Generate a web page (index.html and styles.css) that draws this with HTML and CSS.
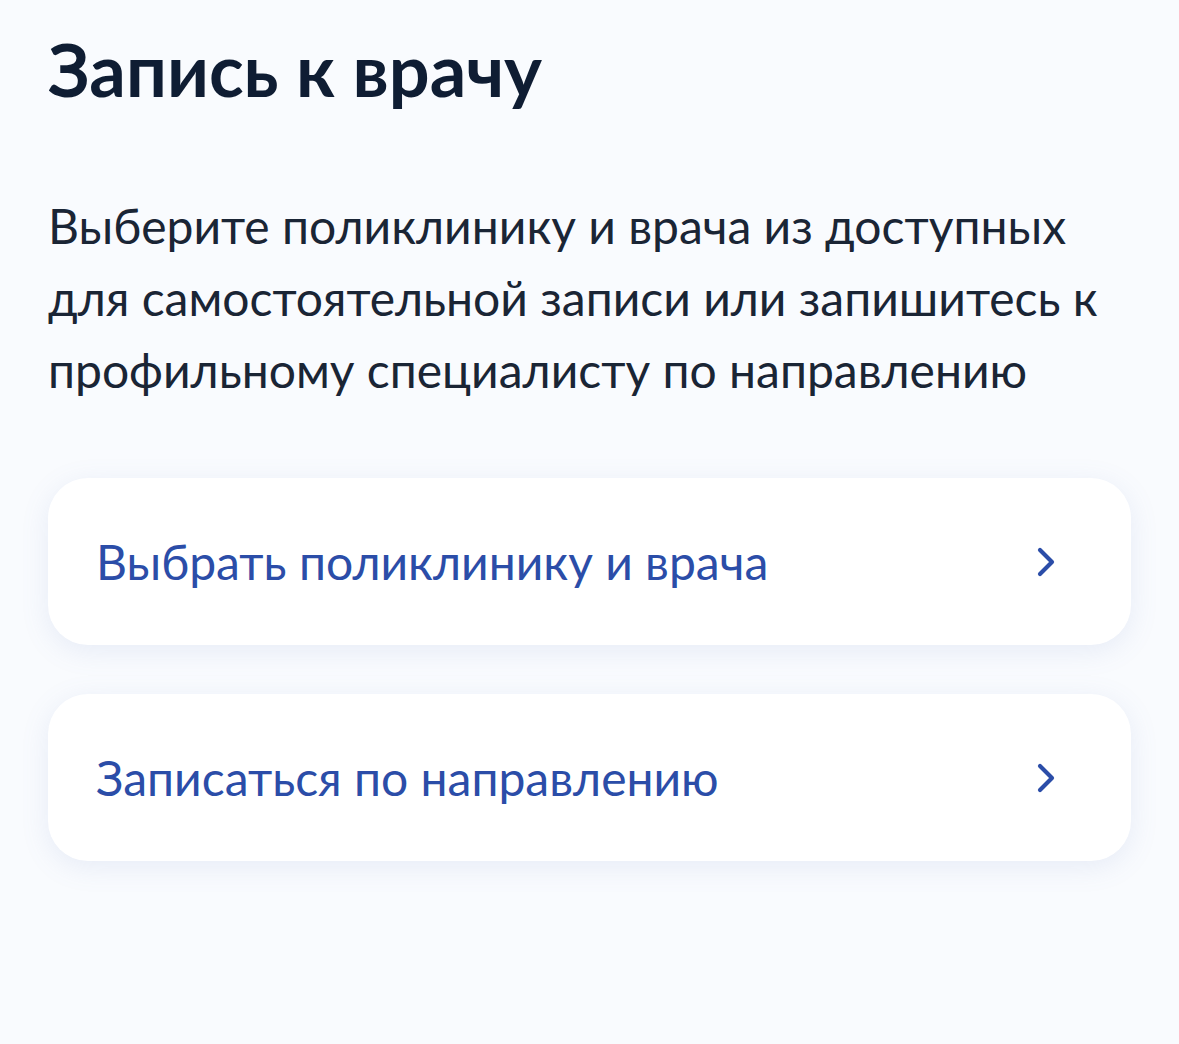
FILE: index.html
```html
<!DOCTYPE html>
<html lang="ru">
<head>
<meta charset="utf-8">
<title>Запись к врачу</title>
<link rel="stylesheet" href="styles.css">
</head>
<body>
<main class="page">
  <h1 class="title">Запись к врачу</h1>
  <p class="lead">Выберите поликлинику и врача из доступных для самостоятельной записи или запишитесь к профильному специалисту по направлению</p>
  <div class="cards">
    <a class="card" href="#">
      <span class="card-text">Выбрать поликлинику и врача</span>
      <svg class="chev" width="18" height="30" viewBox="0 0 18 30" aria-hidden="true"><path d="M3 3 L15 15 L3 27" fill="none" stroke="#2b4da8" stroke-width="4.2" stroke-linecap="round" stroke-linejoin="round"/></svg>
    </a>
    <a class="card" href="#">
      <span class="card-text">Записаться по направлению</span>
      <svg class="chev" width="18" height="30" viewBox="0 0 18 30" aria-hidden="true"><path d="M3 3 L15 15 L3 27" fill="none" stroke="#2b4da8" stroke-width="4.2" stroke-linecap="round" stroke-linejoin="round"/></svg>
    </a>
  </div>
</main>
</body>
</html>
```

FILE: styles.css
```css
html, body {
  margin: 0;
  padding: 0;
  background: #f9fbfe;
}
body {
  font-family: Lato, "Noto Sans", sans-serif;
  color: #0b1f33;
  min-height: 1044px;
}
.page {
  padding: 26px 48px 0 48px;
}
.title {
  margin: 0;
  font-size: 72px;
  font-weight: 700;
  line-height: 1.2;
  color: #0f1d33;
}
.lead {
  margin: 78px 0 0 0;
  font-size: 48px;
  line-height: 72px;
  font-weight: 400;
  color: #1a2535;
}
.cards {
  margin-top: 72px;
  display: flex;
  flex-direction: column;
  gap: 49px;
}
.card {
  display: flex;
  align-items: center;
  justify-content: space-between;
  background: #ffffff;
  border-radius: 40px;
  padding: 56px 76px 56px 48px;
  box-shadow: 0 6px 28px rgba(110, 130, 190, 0.13);
  text-decoration: none;
}
.card-text {
  font-size: 48px;
  line-height: 55px;
  color: #2b4da8;
}
.chev {
  display: block;
  flex: none;
}
```
